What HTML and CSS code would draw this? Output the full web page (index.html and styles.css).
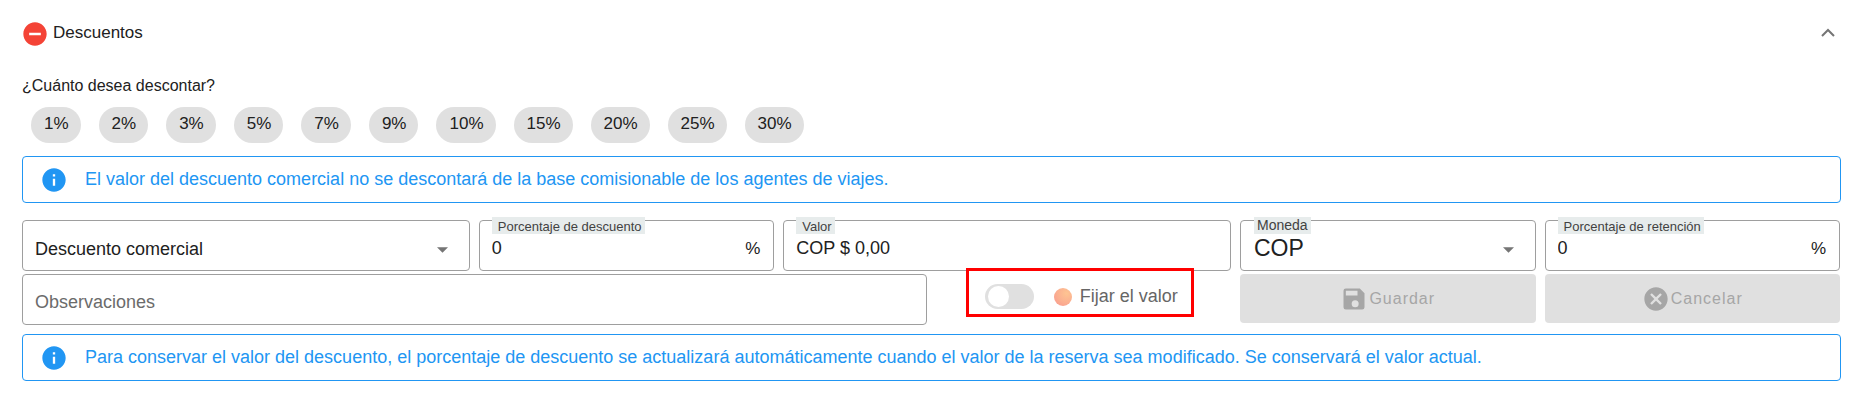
FILE: index.html
```
<!DOCTYPE html>
<html lang="es">

<head>
  <meta charset="utf-8">
  <meta name="viewport" content="width=device-width, initial-scale=1">
  <title>Descuentos</title>

  <link rel="stylesheet" href="styles.css">
</head>

<body>
  <section class="panel">
    <header class="panel-header">
      <svg class="icon-remove" viewBox="0 0 24 24">
        <path fill="#f44336" d="M12 2C6.48 2 2 6.48 2 12s4.48 10 10 10 10-4.48 10-10S17.52 2 12 2zm5 11H7v-2h10v2z" />
      </svg>
      <h1>Descuentos</h1>
      <button type="button" class="collapse" aria-label="Contraer">
        <svg viewBox="0 0 14 9">
          <path fill="none" stroke="#757575" stroke-width="2" d="M1 8l6-6 6 6" />
        </svg>
      </button>
    </header>

    <p class="question">¿Cuánto desea descontar?</p>
    <div class="chips">
      <button type="button">1%</button>
      <button type="button">2%</button>
      <button type="button">3%</button>
      <button type="button">5%</button>
      <button type="button">7%</button>
      <button type="button">9%</button>
      <button type="button">10%</button>
      <button type="button">15%</button>
      <button type="button">20%</button>
      <button type="button">25%</button>
      <button type="button">30%</button>
    </div>

    <div class="alert">
      <svg viewBox="0 0 24 24">
        <path fill="#2196f3" d="M12 2C6.48 2 2 6.48 2 12s4.48 10 10 10 10-4.48 10-10S17.52 2 12 2zm1 15h-2v-6h2v6zm0-8h-2V7h2v2z" />
      </svg>
      <p>El valor del descuento comercial no se descontará de la base comisionable de los agentes de viajes.</p>
    </div>

    <form class="form-grid">
      <div class="field span-3">
        <select id="tipo" name="tipo" aria-label="Tipo de descuento">
          <option>Descuento comercial</option>
        </select>
        <svg class="arrow" viewBox="0 0 10 5">
          <path fill="#757575" d="M0 0h10L5 5z" />
        </svg>
      </div>
      <div class="field span-2">
        <label for="porcentaje">Porcentaje de descuento</label>
        <input type="text" id="porcentaje" name="porcentaje" value="0">
        <span class="suffix">%</span>
      </div>
      <div class="field span-3">
        <label for="valor">Valor</label>
        <input type="text" id="valor" name="valor" value="COP $ 0,00">
      </div>
      <div class="field field-currency span-2">
        <label for="moneda">Moneda</label>
        <select id="moneda" name="moneda">
          <option>COP</option>
        </select>
        <svg class="arrow" viewBox="0 0 10 5">
          <path fill="#757575" d="M0 0h10L5 5z" />
        </svg>
      </div>
      <div class="field span-2">
        <label for="retencion">Porcentaje de retención</label>
        <input type="text" id="retencion" name="retencion" value="0">
        <span class="suffix">%</span>
      </div>

      <div class="field span-6">
        <input type="text" id="observaciones" name="observaciones" placeholder="Observaciones" aria-label="Observaciones">
      </div>
      <div class="toggle-cell span-2">
        <div class="toggle">
          <input type="checkbox" id="fijar" name="fijar">
          <span class="dot"></span>
          <label for="fijar">Fijar el valor</label>
        </div>
      </div>
      <button type="submit" class="action span-2" disabled>
        <svg viewBox="0 0 24 24">
          <path fill="#a6a6a6" d="M17 3H5a2 2 0 0 0-2 2v14a2 2 0 0 0 2 2h14a2 2 0 0 0 2-2V7l-4-4zm-4 16a3 3 0 1 1 0-6 3 3 0 0 1 0 6zm2-10H5V5h10v4z" />
        </svg>
        Guardar
      </button>
      <button type="button" class="action span-2" disabled>
        <svg viewBox="0 0 24 24">
          <path fill="#a6a6a6" d="M12 2C6.47 2 2 6.47 2 12s4.47 10 10 10 10-4.47 10-10S17.53 2 12 2zm5 13.59L15.59 17 12 13.41 8.41 17 7 15.59 10.59 12 7 8.41 8.41 7 12 10.59 15.59 7 17 8.41 13.41 12 17 15.59z" />
        </svg>
        Cancelar
      </button>
    </form>

    <div class="alert">
      <svg viewBox="0 0 24 24">
        <path fill="#2196f3" d="M12 2C6.48 2 2 6.48 2 12s4.48 10 10 10 10-4.48 10-10S17.52 2 12 2zm1 15h-2v-6h2v6zm0-8h-2V7h2v2z" />
      </svg>
      <p>Para conservar el valor del descuento, el porcentaje de descuento se actualizará automáticamente cuando el valor de la reserva sea modificado. Se conservará el valor actual.</p>
    </div>
  </section>
</body>

</html>
```
FILE: styles.css
```
* {
  box-sizing: border-box;
}

body {
  margin: 0;
  background: #fff;
  color: #212121;
  font-family: "Liberation Sans", Arial, sans-serif;
  font-size: 16px;
}

h1,
p {
  margin: 0;
  font-weight: normal;
}

button,
input,
select {
  font-family: inherit;
}

.panel {
  padding: 20px 27px 30px 22px;
}

.panel-header {
  display: flex;
  align-items: center;
  height: 28px;
}

.icon-remove {
  width: 28px;
  height: 28px;
  margin: 0 4px 0 -1px;
}

.panel-header h1 {
  flex: 1;
  padding-bottom: 3px;
  font-size: 17px;
}

.collapse {
  padding: 0 0 4px;
  margin-right: 6px;
  border: none;
  background: none;
  cursor: pointer;
}

.collapse svg {
  display: block;
  width: 14px;
  height: 9px;
}

.question {
  margin-top: 28px;
  font-size: 16px;
  line-height: 20px;
}

.chips {
  display: flex;
  gap: 18px;
  margin: 11px 0 13px;
  padding-left: 9px;
}

.chips button {
  height: 36px;
  padding: 0 12px 3px 13px;
  border: none;
  border-radius: 18px;
  background: #e0e0e0;
  color: #212121;
  font-size: 17px;
  cursor: pointer;
}

.alert {
  display: flex;
  align-items: center;
  gap: 17px;
  min-height: 47px;
  padding: 0 17px;
  border: 1px solid #2196f3;
  border-radius: 4px;
  color: #2196f3;
  font-size: 18px;
}

.alert svg {
  flex: none;
  width: 28px;
  height: 28px;
}

.form-grid {
  display: grid;
  grid-template-columns: repeat(12, minmax(0, 1fr));
  gap: 3px 9px;
  margin: 17px 0 9px;
  padding-right: 1px;
}

.span-2 {
  grid-column: span 2;
}

.span-3 {
  grid-column: span 3;
}

.span-6 {
  grid-column: span 6;
}

.field {
  display: flex;
  position: relative;
  align-items: center;
  height: 51px;
  border: 1px solid #9e9e9e;
  border-radius: 4px;
}

.field label {
  position: absolute;
  top: -4px;
  left: 12px;
  height: 17px;
  padding: 0 3px 0 6px;
  background: #e7ecec;
  color: #424242;
  font-size: 13px;
  line-height: 19px;
}

.field input,
.field select {
  flex: 1;
  width: 100%;
  height: 49px;
  padding: 6px 12px 0;
  border: none;
  outline: none;
  appearance: none;
  background: none;
  color: #212121;
  font-size: 18px;
}

.field input::placeholder {
  color: #6b6b6b;
  opacity: 1;
}

.field .suffix {
  padding: 6px 13px 0 0;
  font-size: 17px;
}

.field .arrow {
  position: absolute;
  top: 26px;
  right: 21px;
  width: 11px;
  height: 6px;
  pointer-events: none;
}

.field .suffix,
.field .arrow {
  flex: none;
}

.field-currency label {
  left: 13px;
  padding: 0 3px;
  font-size: 14px;
  line-height: 17px;
}

.field-currency select {
  padding: 4px 13px 0;
  font-size: 23px;
}

.toggle-cell {
  display: flex;
  align-items: center;
  justify-content: center;
  height: 45px;
  padding-right: 4px;
}

.toggle {
  display: flex;
  position: relative;
  align-items: center;
  color: #666;
  font-size: 18px;
}

/* red highlight drawn around the switch */
.toggle::after {
  content: "";
  position: absolute;
  inset: -16px -16px -8px -19px;
  border: 3px solid #f00;
  pointer-events: none;
}

.toggle input {
  width: 49px;
  height: 25px;
  margin: 0 20px 0 0;
  padding: 2px 3px;
  border-radius: 13px;
  appearance: none;
  background: #e0e0e0;
  cursor: pointer;
}

.toggle input::before {
  content: "";
  display: block;
  width: 21px;
  height: 21px;
  border-radius: 50%;
  background: #fff;
}

.toggle input:checked::before {
  margin-left: auto;
}

.dot {
  width: 18px;
  height: 18px;
  margin-right: 8px;
  border-radius: 50%;
  background: radial-gradient(circle at 70% 30%, #fec492, #fbae90 55%, #f8968f);
}

.action {
  display: flex;
  align-items: center;
  justify-content: center;
  gap: 1px;
  height: 49px;
  padding: 0;
  border: none;
  border-radius: 4px;
  background: #e0e0e0;
  color: #a6a6a6;
  font-size: 16px;
  letter-spacing: 1px;
}

.action svg {
  width: 28px;
  height: 28px;
}
```
